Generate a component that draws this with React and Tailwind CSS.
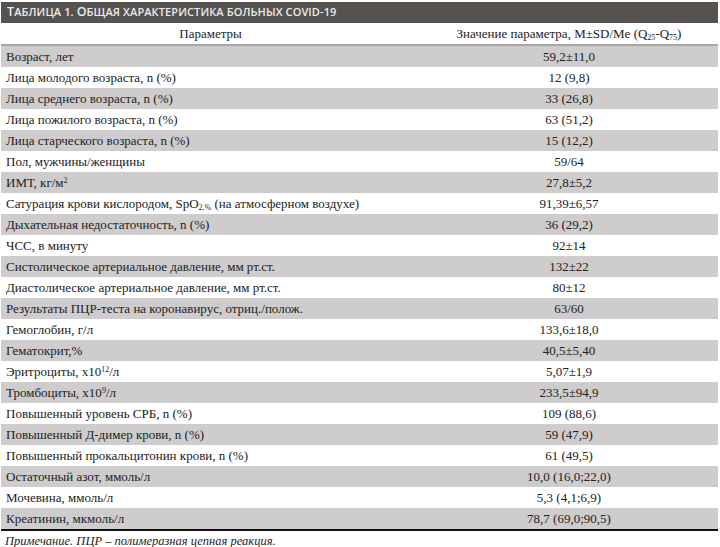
import React from "react";

const Sup = ({ children }) => <sup className="text-[8px] leading-none">{children}</sup>;
const Sub = ({ children }) => <sub className="text-[8px] leading-none">{children}</sub>;

const rows = [
  ["Возраст, лет", "59,2±11,0"],
  ["Лица молодого возраста, n (%)", "12 (9,8)"],
  ["Лица среднего возраста, n (%)", "33 (26,8)"],
  ["Лица пожилого возраста, n (%)", "63 (51,2)"],
  ["Лица старческого возраста, n (%)", "15 (12,2)"],
  ["Пол, мужчины/женщины", "59/64"],
  [<>ИМТ, кг/м<Sup>2</Sup></>, "27,8±5,2"],
  [<>Сатурация крови кислородом, SpO<Sub>2,%</Sub> (на атмосферном воздухе)</>, "91,39±6,57"],
  ["Дыхательная недостаточность, n (%)", "36 (29,2)"],
  ["ЧСС, в минуту", "92±14"],
  ["Систолическое артериальное давление, мм рт.ст.", "132±22"],
  ["Диастолическое артериальное давление, мм рт.ст.", "80±12"],
  ["Результаты ПЦР-теста на коронавирус, отриц./полож.", "63/60"],
  ["Гемоглобин, г/л", "133,6±18,0"],
  ["Гематокрит,%", "40,5±5,40"],
  [<>Эритроциты, x10<Sup>12</Sup>/л</>, "5,07±1,9"],
  [<>Тромбоциты, x10<Sup>9</Sup>/л</>, "233,5±94,9"],
  ["Повышенный уровень СРБ, n (%)", "109 (88,6)"],
  ["Повышенный Д-димер крови, n (%)", "59 (47,9)"],
  ["Повышенный прокальцитонин крови, n (%)", "61 (49,5)"],
  ["Остаточный азот, ммоль/л", "10,0 (16,0;22,0)"],
  ["Мочевина, ммоль/л", "5,3 (4,1;6,9)"],
  ["Креатинин, мкмоль/л", "78,7 (69,0;90,5)"],
];

export default function App() {
  return (
    <div className="w-[720px] h-[547px] bg-white pl-px pr-[2px] overflow-hidden font-['Liberation_Serif',serif] text-[#222]">
      {/* Title bar */}
      <div className="mt-[2px] h-[21px] bg-[#555250] flex items-center pl-[6px] font-['Open_Sans',sans-serif] text-[11px] font-semibold tracking-[0.1px] text-[#ececec] uppercase leading-none">
        <span>
          <span className="text-[12.5px]">Т</span>аблица 1. <span className="text-[12.5px]">О</span>бщая характеристика больных COVID-19
        </span>
      </div>

      {/* Header */}
      <div className="h-[21px] flex items-center text-[13px] leading-none border-b-2 border-[#a8a6a6] box-content">
        <div className="w-[419px] text-center">Параметры</div>
        <div className="flex-1 text-center">
          Значение параметра, M±SD/Me (Q<Sub>25</Sub>-Q<Sub>75</Sub>)
        </div>
      </div>

      {/* Body */}
      <div className="border-b-2 border-[#111]">
        {rows.map(([label, value], i) => (
          <div
            key={i}
            className={`h-[21px] flex items-center text-[13px] leading-none ${
              i % 2 === 0 ? "bg-[#cecccc]" : "bg-white"
            }`}
          >
            <div className="w-[419px] pl-[5px] whitespace-nowrap">{label}</div>
            <div className="flex-1 text-center">{value}</div>
          </div>
        ))}
      </div>

      <div className="pl-[4px] pt-[3px] text-[12.5px] leading-[14px] italic">
        Примечание. ПЦР – полимеразная цепная реакция.
      </div>
    </div>
  );
}
